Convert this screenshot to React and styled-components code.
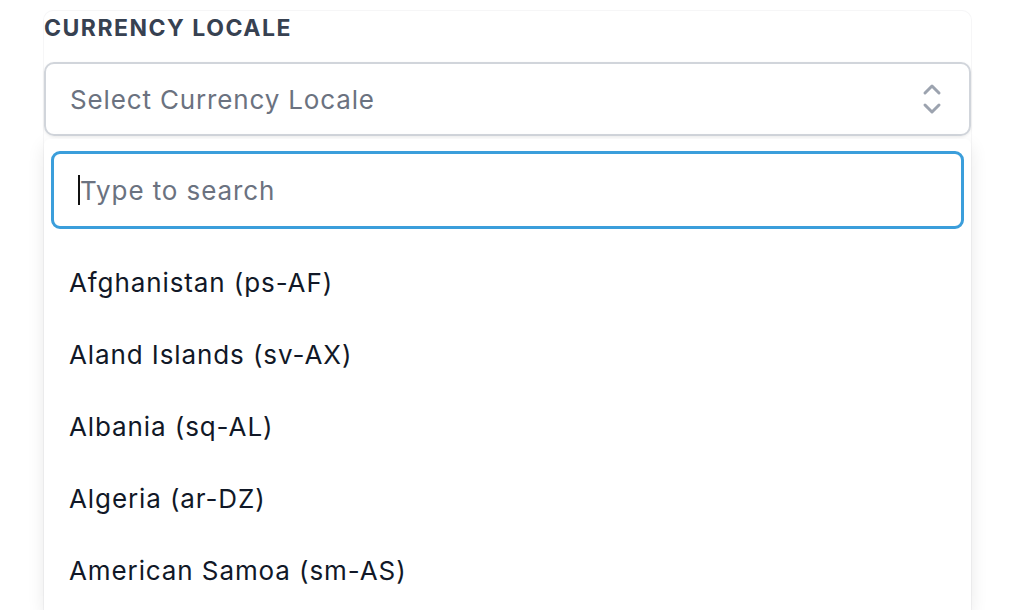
import React from 'react';
import styled, { createGlobalStyle } from 'styled-components';

const Global = createGlobalStyle`
  html, body {
    margin: 0;
    padding: 0;
    background: #ffffff;
    font-family: Inter, "Noto Sans", sans-serif;
    overflow: hidden;
  }
`;

const Page = styled.div`
  width: 1016px;
  height: 610px;
  padding: 10px 44px 0;
  box-sizing: border-box;
  display: flex;
  flex-direction: column;
`;

const Panel = styled.div`
  flex: 1;
  display: flex;
  flex-direction: column;
  border: 1px solid #f6f6f7;
  border-bottom: none;
  border-radius: 10px 10px 0 0;
  margin-left: -1px;
  min-height: 0;
`;

const Label = styled.div`
  font-size: 23px;
  font-weight: 700;
  letter-spacing: 1.5px;
  color: #374151;
  line-height: 30px;
  margin-top: 2px;
`;

const Select = styled.div`
  margin-top: 19px;
  height: 74px;
  flex-shrink: 0;
  border: 2px solid #d1d5db;
  border-radius: 10px;
  box-shadow: 0 1px 3px rgba(0, 0, 0, 0.08);
  display: flex;
  align-items: center;
  justify-content: space-between;
  padding: 0 26px 0 24px;
  box-sizing: border-box;
`;

const Placeholder = styled.span`
  font-size: 26px;
  letter-spacing: 0.85px;
  color: #6b7280;
`;

const Menu = styled.div`
  flex: 1;
  min-height: 0;
  overflow: hidden;
  margin-top: 3px;
  padding: 12px 7px 0;
  background: #fff;
  box-shadow: 0 6px 18px rgba(0, 0, 0, 0.09);
  border-radius: 6px 6px 0 0;
`;

const Search = styled.div`
  height: 78px;
  border: 3px solid #3b9edb;
  border-radius: 9px;
  box-sizing: border-box;
  display: flex;
  align-items: center;
  padding-left: 24px;
`;

const Caret = styled.span`
  width: 2px;
  height: 30px;
  background: #111;
`;

const SearchText = styled.span`
  font-size: 26px;
  letter-spacing: 0.9px;
  color: #6b7280;
`;

const List = styled.div`
  margin-top: 17px;
  display: flex;
  flex-direction: column;
`;

const Item = styled.div`
  height: 72px;
  display: flex;
  align-items: center;
  padding-left: 18px;
  font-size: 26px;
  letter-spacing: 0.9px;
  color: #111827;
`;

const Chevrons = () => (
  <svg width="22" height="34" viewBox="0 0 22 34" fill="none" stroke="#9ca3af" strokeWidth="3" strokeLinecap="round" strokeLinejoin="round">
    <path d="M4 11 L11 4 L18 11" />
    <path d="M4 23 L11 30 L18 23" />
  </svg>
);

const items = [
  'Afghanistan (ps-AF)',
  'Aland Islands (sv-AX)',
  'Albania (sq-AL)',
  'Algeria (ar-DZ)',
  'American Samoa (sm-AS)',
];

export default function App() {
  return (
    <Page>
      <Global />
      <Panel>
        <Label>CURRENCY LOCALE</Label>
        <Select>
          <Placeholder>Select Currency Locale</Placeholder>
          <Chevrons />
        </Select>
        <Menu>
          <Search>
            <Caret />
            <SearchText>Type to search</SearchText>
          </Search>
          <List>
            {items.map((it) => (
              <Item key={it}>{it}</Item>
            ))}
          </List>
        </Menu>
      </Panel>
    </Page>
  );
}
